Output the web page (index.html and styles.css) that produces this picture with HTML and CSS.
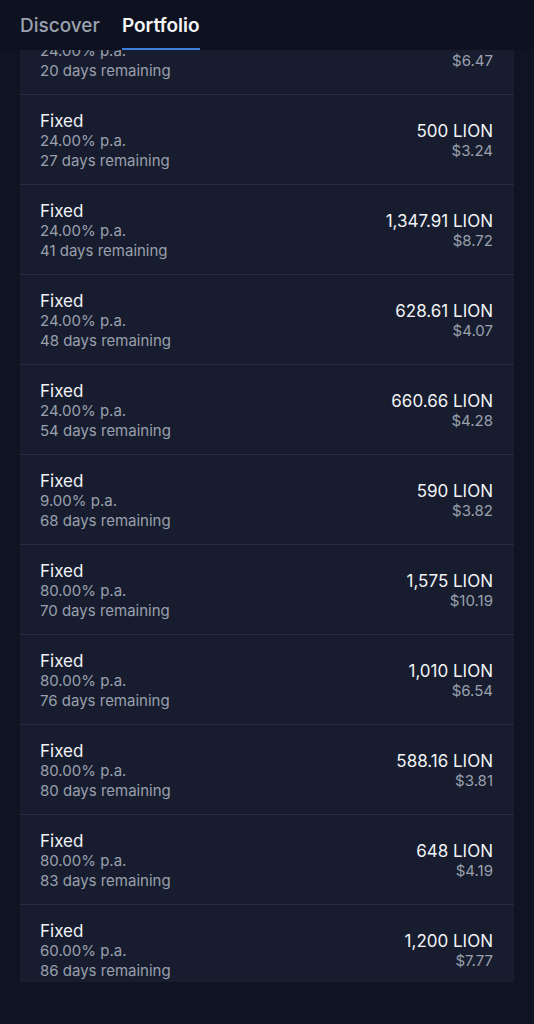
FILE: index.html
```html
<!DOCTYPE html>
<html lang="en">
<head>
  <meta charset="UTF-8">
  <title>Portfolio</title>
  <link rel="stylesheet" href="styles.css">
</head>
<body>

  <div class="tabs">
    <div class="tab">Discover</div>
    <div class="tab active">Portfolio</div>
  </div>

  <div class="viewport">
    <div class="list">
      <div class="row">
        <div class="info">
          <div class="title">Fixed</div>
          <div class="sub">24.00% p.a.</div>
          <div class="sub">20 days remaining</div>
        </div>
        <div class="amount">
          <div class="value">1,000 LION</div>
          <div class="sub">$6.47</div>
        </div>
      </div>
      <div class="row">
        <div class="info">
          <div class="title">Fixed</div>
          <div class="sub">24.00% p.a.</div>
          <div class="sub">27 days remaining</div>
        </div>
        <div class="amount">
          <div class="value">500 LION</div>
          <div class="sub">$3.24</div>
        </div>
      </div>
      <div class="row">
        <div class="info">
          <div class="title">Fixed</div>
          <div class="sub">24.00% p.a.</div>
          <div class="sub">41 days remaining</div>
        </div>
        <div class="amount">
          <div class="value">1,347.91 LION</div>
          <div class="sub">$8.72</div>
        </div>
      </div>
      <div class="row">
        <div class="info">
          <div class="title">Fixed</div>
          <div class="sub">24.00% p.a.</div>
          <div class="sub">48 days remaining</div>
        </div>
        <div class="amount">
          <div class="value">628.61 LION</div>
          <div class="sub">$4.07</div>
        </div>
      </div>
      <div class="row">
        <div class="info">
          <div class="title">Fixed</div>
          <div class="sub">24.00% p.a.</div>
          <div class="sub">54 days remaining</div>
        </div>
        <div class="amount">
          <div class="value">660.66 LION</div>
          <div class="sub">$4.28</div>
        </div>
      </div>
      <div class="row">
        <div class="info">
          <div class="title">Fixed</div>
          <div class="sub">9.00% p.a.</div>
          <div class="sub">68 days remaining</div>
        </div>
        <div class="amount">
          <div class="value">590 LION</div>
          <div class="sub">$3.82</div>
        </div>
      </div>
      <div class="row">
        <div class="info">
          <div class="title">Fixed</div>
          <div class="sub">80.00% p.a.</div>
          <div class="sub">70 days remaining</div>
        </div>
        <div class="amount">
          <div class="value">1,575 LION</div>
          <div class="sub">$10.19</div>
        </div>
      </div>
      <div class="row">
        <div class="info">
          <div class="title">Fixed</div>
          <div class="sub">80.00% p.a.</div>
          <div class="sub">76 days remaining</div>
        </div>
        <div class="amount">
          <div class="value">1,010 LION</div>
          <div class="sub">$6.54</div>
        </div>
      </div>
      <div class="row">
        <div class="info">
          <div class="title">Fixed</div>
          <div class="sub">80.00% p.a.</div>
          <div class="sub">80 days remaining</div>
        </div>
        <div class="amount">
          <div class="value">588.16 LION</div>
          <div class="sub">$3.81</div>
        </div>
      </div>
      <div class="row">
        <div class="info">
          <div class="title">Fixed</div>
          <div class="sub">80.00% p.a.</div>
          <div class="sub">83 days remaining</div>
        </div>
        <div class="amount">
          <div class="value">648 LION</div>
          <div class="sub">$4.19</div>
        </div>
      </div>
      <div class="row">
        <div class="info">
          <div class="title">Fixed</div>
          <div class="sub">60.00% p.a.</div>
          <div class="sub">86 days remaining</div>
        </div>
        <div class="amount">
          <div class="value">1,200 LION</div>
          <div class="sub">$7.77</div>
        </div>
      </div>
    </div>
  </div>

</body>
</html>
```

FILE: styles.css
```css
* {
  box-sizing: border-box;
  font-family: 'Inter', 'Noto Sans', sans-serif;
}

body {
  background-color: #0f1422;
  margin: 0;
  padding: 0;
  height: 1024px;
  overflow: hidden;
}

.tabs {
  display: flex;
  gap: 22px;
  height: 50px;
  padding: 0 20px;
  background-color: #0e1220;
}

.tab {
  font-size: 19px;
  font-weight: 500;
  color: #9ba1ae;
  padding-top: 3px;
  line-height: 45px;
  border-bottom: 2px solid transparent;
}

.tab.active {
  color: #f4f5f7;
  font-weight: 600;
  border-bottom-color: #3d7fdc;
}

.viewport {
  margin: 0 20px;
  height: 932px;
  overflow: hidden;
  background-color: #171d2f;
}

.list {
  margin-top: -45px;
}

.row {
  display: flex;
  align-items: center;
  justify-content: space-between;
  padding: 16px 21px 13px 20px;
  border-bottom: 1px solid #262d40;
}

.title,
.value {
  font-size: 17px;
  line-height: 20px;
  color: #f2f3f6;
}

.sub {
  font-size: 15px;
  line-height: 20px;
  color: #9aa0ad;
}

.amount {
  text-align: right;
}
```
